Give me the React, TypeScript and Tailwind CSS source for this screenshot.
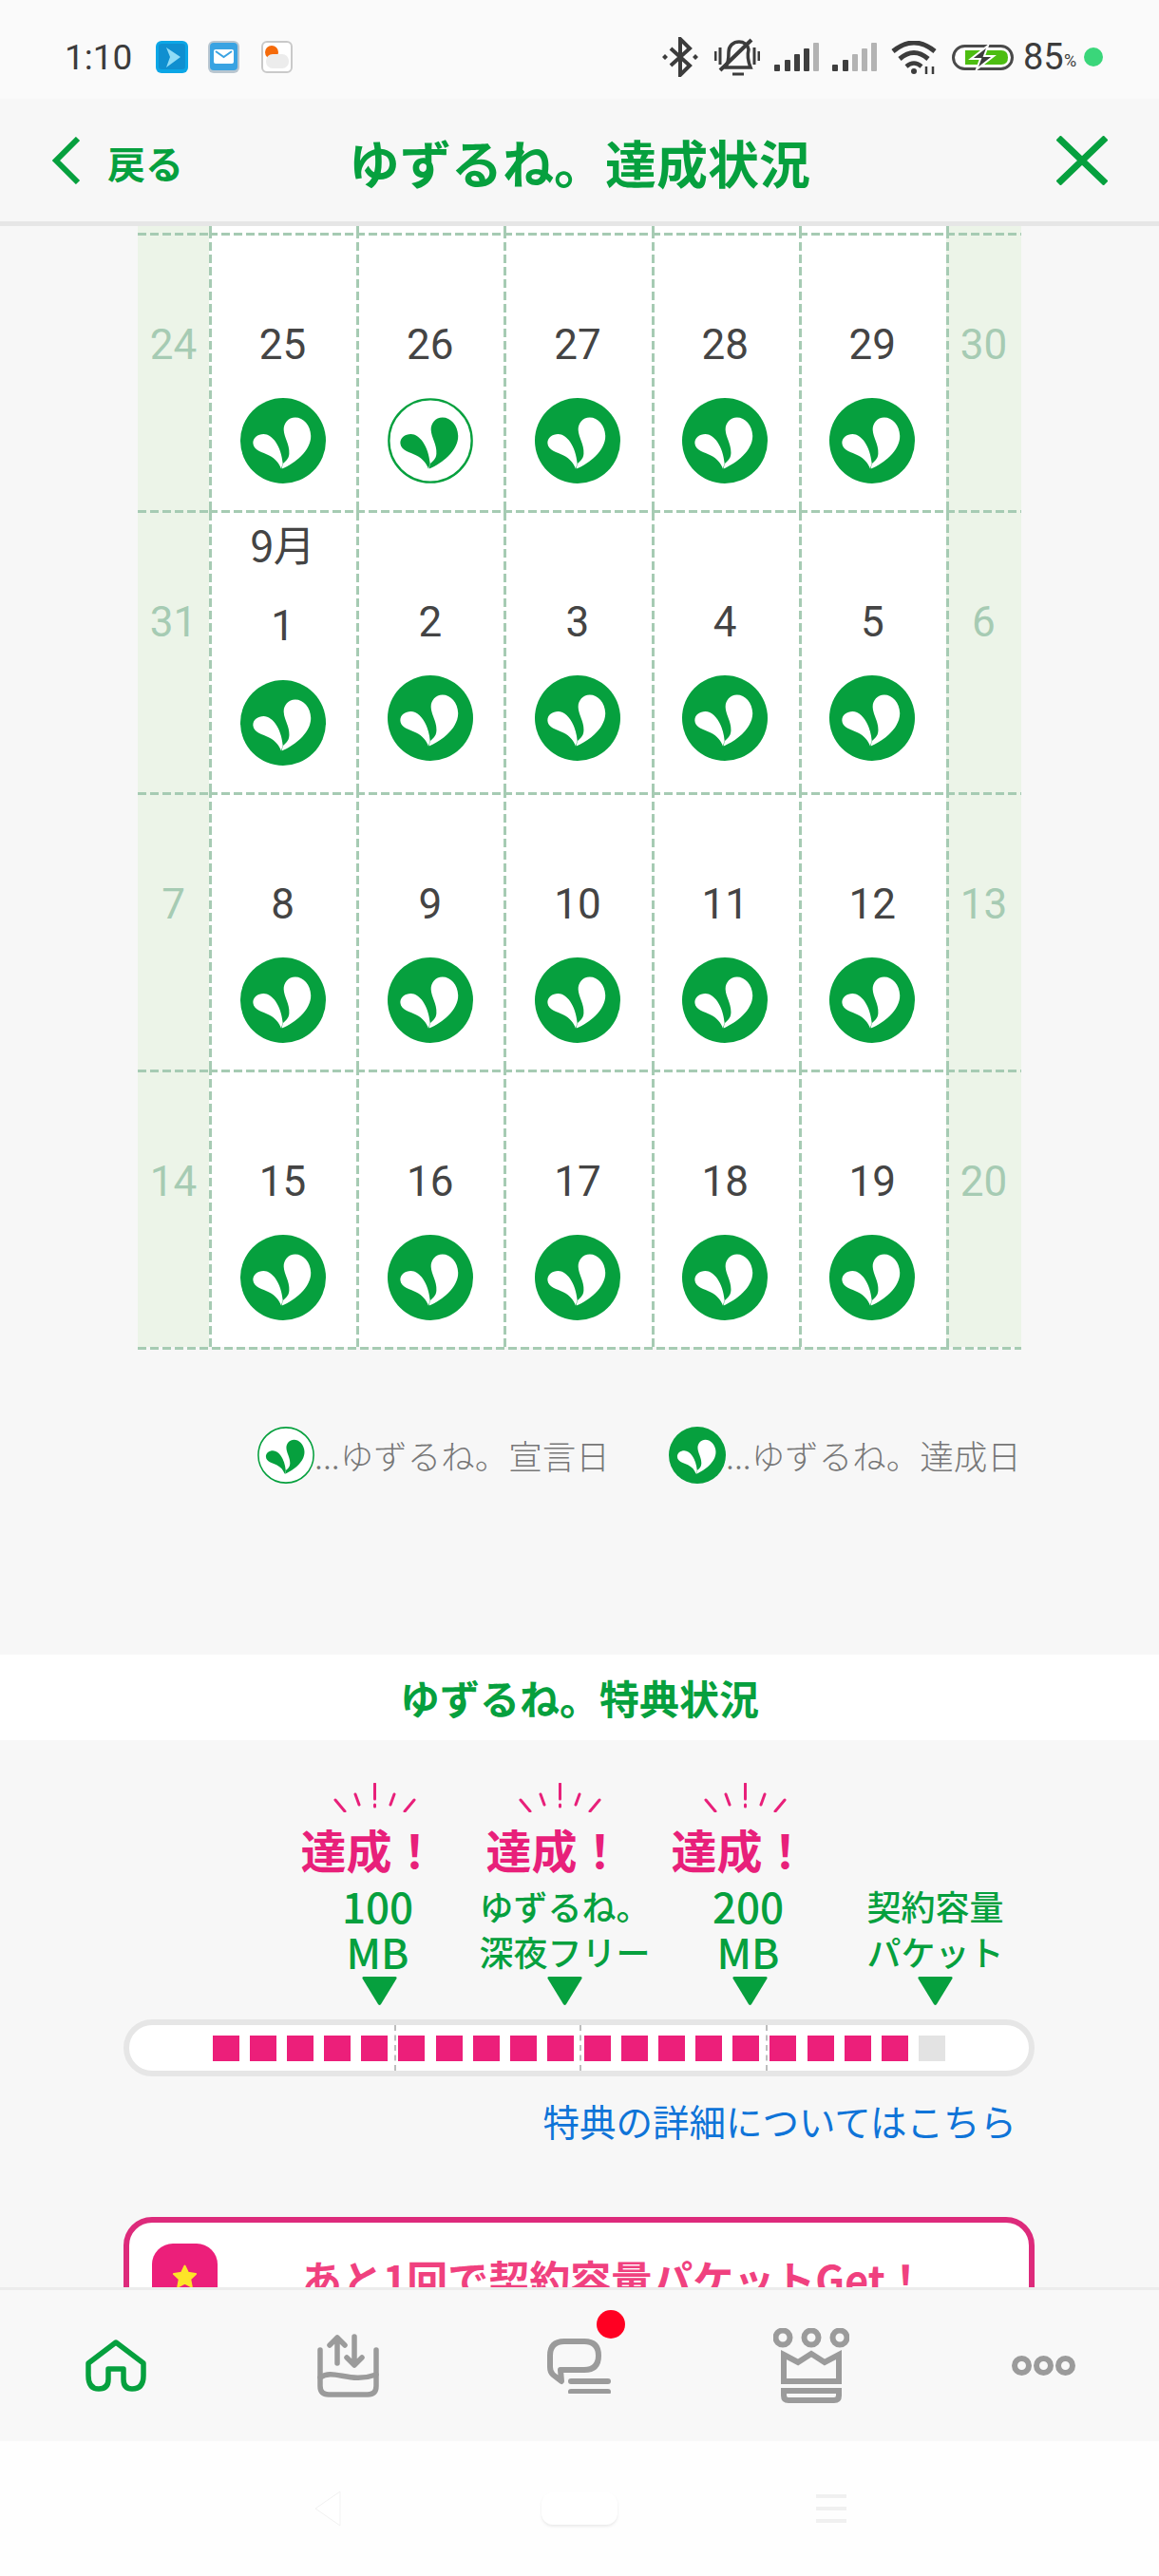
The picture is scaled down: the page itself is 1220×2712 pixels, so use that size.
import React from 'react';

const GREEN = '#06a03e';

// calendar rows: [weekend left, five weekdays, weekend right]
const ROWS = [
    ['24', '25', '26', '27', '28', '29', '30'],
    ['31', '1', '2', '3', '4', '5', '6'],
    ['7', '8', '9', '10', '11', '12', '13'],
    ['14', '15', '16', '17', '18', '19', '20'],
];

const TOP_LINE = 'bg-[repeating-linear-gradient(90deg,#a6cbb3_0_9px,transparent_9px_13px)]';
const LEFT_LINE = 'bg-[repeating-linear-gradient(0deg,#a6cbb3_0_9px,transparent_9px_13px)]';

const Sprout = ({ size, outline = false }: { size: number; outline?: boolean }) => (
    <svg width={size} height={size} viewBox="0 0 268 268" className="block shrink-0">
        <circle cx="134" cy="134" r={outline ? 130 : 134} fill={outline ? '#fff' : GREEN} stroke={GREEN} strokeWidth={outline ? 7 : 0} />
        <g fill={outline ? GREEN : '#fff'}>
            <path d="M130 222C170 205 222 165 221 118C220 85 198 61 172 61C150 61 135 80 136 100C137 125 155 145 153 175C152 190 143 198 133 206Z" />
            <path d="M40 143C38 125 55 113 73 113C100 113 128 150 133 205L128 222C122 205 110 190 90 180C70 170 42 165 40 143Z" />
        </g>
    </svg>
);

const SignalBars = ({ dark }: { dark: number }) => {
    const bars = [[0, 7], [11, 12], [21, 18], [31, 24], [41, 30]];
    return (
        <svg width="47" height="30" viewBox="0 0 47 30" className="shrink-0">
            {bars.map(([x, h], i) => (
                <rect key={x} x={x} y={30 - h} width="6" height={h} rx="1" fill={i < dark ? '#3f3f3f' : '#b3b3b3'} />
            ))}
        </svg>
    );
};

const StatusBar = () => (
    <div className="h-[104px] shrink-0 bg-[#fafafa] pt-4 pl-[68px] flex items-center text-[#3c3c3c] font-['Roboto',sans-serif]">
        <span className="text-[37px] leading-none w-[72px]">1:10</span>
        <svg width="34" height="34" viewBox="0 0 34 34" className="ml-6 shrink-0">
            <rect width="34" height="34" rx="6" fill="#0ba6e6" />
            <rect x="3" y="3" width="28" height="27" rx="3" fill="#0f8fd0" />
            <path d="M11 7L26 17L11 28L15 17Z" fill="#8fdcf7" />
        </svg>
        <svg width="33" height="34" viewBox="0 0 33 34" className="ml-[21px] shrink-0">
            <rect width="33" height="34" rx="6" fill="#b9c6d0" />
            <rect x="2" y="2" width="29" height="29" rx="4" fill="#39a3e2" />
            <rect x="6" y="9" width="21" height="15" rx="2" fill="#fff" />
            <path d="M8 11L16.5 17L25 11" fill="none" stroke="#39a3e2" strokeWidth="2" />
        </svg>
        <svg width="33" height="34" viewBox="0 0 33 34" className="ml-[23px] shrink-0">
            <rect x="1" y="1" width="31" height="32" rx="5" fill="#fff" stroke="#c9c9c9" strokeWidth="2" />
            <circle cx="11" cy="12" r="7" fill="#f56a0a" />
            <rect x="5" y="14" width="24" height="15" rx="7" fill="#ececec" />
        </svg>
        <svg width="38" height="42" viewBox="0 0 38 42" className="ml-[389px] shrink-0" fill="none" stroke="#3c3c3c" strokeWidth="4">
            <path d="M9 12L29 30L19 40V2L29 12L9 30" />
            <path d="M0 21L3 18L6 21L3 24ZM32 21L35 18L38 21L35 24Z" fill="#3c3c3c" stroke="none" />
        </svg>
        <svg width="48" height="40" viewBox="0 0 48 40" className="ml-[17px] shrink-0" fill="none" stroke="#3c3c3c">
            <path d="M12 30C15 26 15 20 15 15C15 8 20 4 26 4C31 4 35 7 36 12C34 20 36 26 38 31H12Z" strokeWidth="3.5" />
            <path d="M6 34L39 2" strokeWidth="4" stroke="#3c3c3c" />
            <path d="M1 14V24M6 10V28M42 10V28M47 14V24" strokeWidth="3" />
            <path d="M19 38H31" strokeWidth="3" />
        </svg>
        <div className="ml-[15px]"><SignalBars dark={4} /></div>
        <div className="ml-[14px]"><SignalBars dark={2} /></div>
        <svg width="49" height="35" viewBox="0 0 49 35" className="ml-[15px] shrink-0" fill="none" stroke="#3c3c3c">
            <path d="M2 11Q24 -7 46 11" strokeWidth="5" />
            <path d="M9 19Q24 6 39 19" strokeWidth="5" />
            <path d="M16 27Q24 20 32 27" strokeWidth="4.5" />
            <circle cx="24" cy="32" r="3" fill="#3c3c3c" stroke="none" />
            <path d="M37 27V35M44 27V35" strokeWidth="2.5" />
        </svg>
        <svg width="65" height="27" viewBox="0 0 65 27" className="ml-[15px] shrink-0">
            <rect x="1.5" y="1.5" width="62" height="24" rx="12" fill="#fff" stroke="#4a4a4a" strokeWidth="3" />
            <path d="M14 6H52Q59 6 59 13.5Q59 21 52 21H14Z" fill="#4dbd12" />
            <path d="M38 1L20 15H30L26 26L44 12H34Z" fill="#3c3c3c" stroke="#fff" strokeWidth="2" />
        </svg>
        <span className="ml-[10px] text-[38px] leading-none w-[42px]">85</span>
        <span className="text-[18px] leading-none self-end mb-[31px] w-[22px] pl-[1px]">%</span>
        <span className="w-5 h-5 rounded-full bg-[#3ad67a] shrink-0"></span>
    </div>
);

const Header = () => (
    <div className="shrink-0">
        <div className="h-[129px] bg-[#f7f7f7] grid grid-cols-[1fr_auto_1fr] items-center text-[#06a03e] font-['Noto_Sans_CJK_JP',sans-serif] font-bold">
            <div className="flex items-center pl-[55px]">
                <svg width="30" height="50" viewBox="0 0 30 50" className="shrink-0" fill="none" stroke="#06a03e" strokeWidth="6">
                    <path d="M27 2L4 25L27 48" />
                </svg>
                <span className="ml-[28px] text-[40px] leading-none mt-1">戻る</span>
            </div>
            <h1 className="text-[54px] leading-none mt-1">ゆずるね。達成状況</h1>
            <div className="flex justify-end pr-[54px]">
                <svg width="54" height="52" viewBox="0 0 54 52" fill="none" stroke="#06a03e" strokeWidth="7">
                    <path d="M2 2L52 50M52 2L2 50" />
                </svg>
            </div>
        </div>
        <div className="h-[5px] bg-[#e6e6e6]"></div>
    </div>
);

const Cell = ({ day, kind, month, outline, noLeft }: { day: string; kind: 'end' | 'day'; month?: string; outline?: boolean; noLeft?: boolean }) => (
    <div className={`relative flex flex-col items-center pb-[28px] ${month ? 'pt-[9px]' : 'pt-[92px]'} ${kind === 'end' ? 'bg-[#ecf4e8]' : 'bg-white'}`}>
        <div className={`absolute top-0 left-0 right-0 h-[3px] ${TOP_LINE}`}></div>
        {!noLeft && <div className={`absolute top-0 left-0 bottom-0 w-[3px] ${LEFT_LINE}`}></div>}
        {month && <div className="h-[52px] mb-[35px] text-[44px] leading-[52px] text-[#444] font-['Noto_Sans_CJK_JP',sans-serif]">{month}</div>}
        <div className={`h-[52px] leading-[52px] text-[44px] font-['Roboto',sans-serif] ${month ? 'mb-[31px]' : 'mb-[30px]'} ${kind === 'end' ? 'text-[#a6cbb3]' : 'text-[#444]'}`}>{day}</div>
        {kind === 'day' ? <Sprout size={90} outline={outline} /> : <div className="h-[90px]"></div>}
    </div>
);

const Calendar = () => (
    <div className="ml-[145px] w-[930px] grid grid-cols-[75px_repeat(5,155.2px)_79px]">
        {/* tail of the row scrolled out above */}
        <div className="h-[7px] bg-[#ecf4e8]"></div>
        {[0, 1, 2, 3, 4].map(i => (
            <div key={i} className="h-[7px] bg-white relative">
                <div className={`absolute top-0 left-0 bottom-0 w-[3px] ${LEFT_LINE}`}></div>
            </div>
        ))}
        <div className="h-[7px] bg-[#ecf4e8] relative">
            <div className={`absolute top-0 left-0 bottom-0 w-[3px] ${LEFT_LINE}`}></div>
        </div>
        {ROWS.map(row => row.map((d, i) => (
            <Cell key={d} day={d} kind={i === 0 || i === 6 ? 'end' : 'day'} month={d === '1' ? '9月' : undefined} outline={d === '26'} noLeft={i === 0} />
        )))}
        <div className={`col-span-7 h-[3px] ${TOP_LINE}`}></div>
    </div>
);

const Legend = () => (
    <div className="ml-[271px] mt-[81px] flex items-center h-[60px] text-[35.5px] leading-none text-[#777] font-['Noto_Sans_CJK_JP',sans-serif] font-light whitespace-nowrap">
        <Sprout size={60} outline />
        <span className="w-[308px]">...ゆずるね。宣言日</span>
        <div className="ml-[65px]"><Sprout size={60} /></div>
        <span>...ゆずるね。達成日</span>
    </div>
);

const Sparks = () => (
    <svg width="87" height="31" viewBox="0 0 87 31" fill="none" stroke="#e8207a" strokeWidth="3" strokeLinecap="round">
        <path d="M2 18L12 30M23 12L27 23M43.5 1V17M43.5 23V25M64 12L60 23M85 18L75 30" />
    </svg>
);

const MILESTONES = [
    { lines: ['100', 'MB'], done: true, big: true },
    { lines: ['ゆずるね。', '深夜フリー'], done: true, big: false },
    { lines: ['200', 'MB'], done: true, big: true },
    { lines: ['契約容量', 'パケット'], done: false, big: false },
];

const Milestones = () => (
    <div className="ml-[302px] mt-[45px] grid grid-cols-[repeat(4,195px)] font-['Noto_Sans_CJK_JP',sans-serif]">
        {MILESTONES.map(m => (
            <div key={m.lines[0]} className="flex flex-col items-center">
                <div className={`h-[31px] pr-[10px] ${m.done ? '' : 'invisible'}`}><Sparks /></div>
                <div className={`mt-[10px] h-[56px] pr-[22px] text-[48px] leading-[56px] font-bold text-[#e8207a] whitespace-nowrap ${m.done ? '' : 'invisible'}`}>達成！</div>
                <div className={`mt-[8px] text-center font-medium leading-[48px] text-[#06a03e] whitespace-nowrap ${m.big ? 'text-[44px] pr-[4px]' : 'text-[36px]'}`}>
                    <div>{m.lines[0]}</div>
                    <div>{m.lines[1]}</div>
                </div>
                <svg width="37" height="30" viewBox="0 0 37 30" className="mt-[3px]">
                    <path d="M2 0H35Q37 0 36.5 2L20 29Q18.5 31 17 29L0.5 2Q0 0 2 0Z" fill="#06a03e" />
                </svg>
            </div>
        ))}
    </div>
);

const ProgressBar = () => (
    <div className="relative ml-[130px] mt-[15px] w-[959px] h-[60px] rounded-full border-[6px] border-[#e6e6e6] bg-white flex items-center pl-[88px] gap-[11.1px]">
        {Array.from({ length: 20 }).map((_, i) => (
            <div key={i} className={`w-[28px] h-[27px] ${i < 19 ? 'bg-[#ec1f7a]' : 'bg-[#e3e3e3]'}`}></div>
        ))}
        <div className="absolute top-0 bottom-0 left-[279px] border-l-2 border-dashed border-[#bdbdbd]"></div>
        <div className="absolute top-0 bottom-0 left-[474px] border-l-2 border-dashed border-[#bdbdbd]"></div>
        <div className="absolute top-0 bottom-0 left-[670px] border-l-2 border-dashed border-[#bdbdbd]"></div>
    </div>
);

const NextCard = () => (
    <div className="ml-[130px] mt-[77px] w-[959px] h-[200px] rounded-[30px] border-[6px] border-[#dd2a7b] bg-white flex items-start pl-[24px] pt-[22px] font-['Noto_Sans_CJK_JP',sans-serif]">
        <div className="w-[69px] h-[69px] rounded-[22px] bg-[#ec1f7a] flex items-center justify-center shrink-0">
            <svg width="27" height="26" viewBox="0 0 24 24">
                <path d="M12 1.5L15.2 8.2L22.6 9.2L17.2 14.2L18.6 21.6L12 18L5.4 21.6L6.8 14.2L1.4 9.2L8.8 8.2Z" fill="#fde428" stroke="#fde428" strokeWidth="2" strokeLinejoin="round" />
            </svg>
        </div>
        <p className="ml-[88px] mt-[8px] text-[43px] leading-[56px] font-bold text-[#f0417f] whitespace-nowrap">あと1回で契約容量パケットGet！</p>
    </div>
);

const TabBar = () => (
    <div className="h-[162px] shrink-0 border-t-[3px] border-[#ececec] bg-[#f8f8f8] grid grid-cols-5 place-items-center">
        <svg width="64" height="55" viewBox="0 0 64 55" fill="none" stroke="#06a03e" strokeWidth="5.5" strokeLinejoin="round">
            <path d="M32 3L61 25V38Q61 52 49 52Q40 52 40 42V31H24V42Q24 52 14 52Q3 52 3 38V25Z" />
        </svg>
        <svg width="66" height="67" viewBox="0 0 66 67" fill="none" stroke="#9b9b9b" strokeWidth="5.5" strokeLinecap="round" strokeLinejoin="round">
            <path d="M4 17V55Q4 64 13 64H54Q63 64 63 55V17" />
            <path d="M4 46C18 36 35 53 63 43" />
            <path d="M22 31V4M14 12L22 4L30 12" />
            <path d="M40 3V33M32 25L40 33L48 25" />
        </svg>
        <div className="relative">
            <svg width="69" height="58" viewBox="0 0 69 58" className="block" fill="none" stroke="#9b9b9b" strokeWidth="6" strokeLinecap="round" strokeLinejoin="round">
                <path d="M14 33H39Q54 33 54 18Q54 3 39 3H18Q3 3 3 18V30Q3 35 6 38L15 45Z" />
                <path d="M25 45H64M25 56H64" />
            </svg>
            <span className="absolute -top-[30px] left-[52px] w-[30px] h-[30px] rounded-full bg-[#ff0022]"></span>
        </div>
        <svg width="80" height="79" viewBox="0 0 80 79" fill="none" stroke="#9b9b9b" strokeWidth="6">
            <circle cx="10" cy="10" r="7.5" />
            <circle cx="40" cy="10" r="7.5" />
            <circle cx="70" cy="10" r="7.5" />
            <path d="M11 28L26 36L40 27L54 36L69 28V56H11Z" />
            <path d="M11 66H69V71Q69 76 64 76H16Q11 76 11 71Z" />
        </svg>
        <svg width="67" height="21" viewBox="0 0 67 21" fill="none" stroke="#9b9b9b" strokeWidth="6">
            <circle cx="10.5" cy="10.5" r="7.5" />
            <circle cx="33.5" cy="10.5" r="7.5" />
            <circle cx="56.5" cy="10.5" r="7.5" />
        </svg>
    </div>
);

const SoftKeys = () => (
    <div className="h-[142px] shrink-0 bg-[#fefefe] grid grid-cols-[265px_265px_265px] justify-center place-items-center">
        <svg width="28" height="38" viewBox="0 0 28 38">
            <path d="M27 1V37L1 19Z" fill="#fff" stroke="#f1f1f1" strokeWidth="1" />
        </svg>
        <div className="w-[80px] h-[34px] rounded-[12px] bg-white shadow-[0_2px_3px_rgba(0,0,0,0.08)]"></div>
        <div className="w-[32px] flex flex-col gap-[9px]">
            <div className="h-[4px] bg-[#f0f0f0]"></div>
            <div className="h-[4px] bg-[#f0f0f0]"></div>
            <div className="h-[4px] bg-[#f0f0f0]"></div>
        </div>
    </div>
);

const App = () => (
    <div className="w-[1220px] h-[2712px] overflow-hidden flex flex-col bg-white">
        <StatusBar />
        <Header />
        <main className="flex-1 min-h-0 overflow-hidden bg-[#f7f7f7]">
            <Calendar />
            <Legend />
            <div className="mt-[180px] h-[90px] bg-white flex items-center justify-center text-[42px] leading-none font-bold text-[#06a03e] font-['Noto_Sans_CJK_JP',sans-serif]">
                ゆずるね。特典状況
            </div>
            <Milestones />
            <ProgressBar />
            <div className="mt-[21px] pr-[150px] text-right text-[38.5px] leading-[50px] text-[#0f74d8] font-['Noto_Sans_CJK_JP',sans-serif]">
                特典の詳細についてはこちら
            </div>
            <NextCard />
        </main>
        <TabBar />
        <SoftKeys />
    </div>
);

export default App;
